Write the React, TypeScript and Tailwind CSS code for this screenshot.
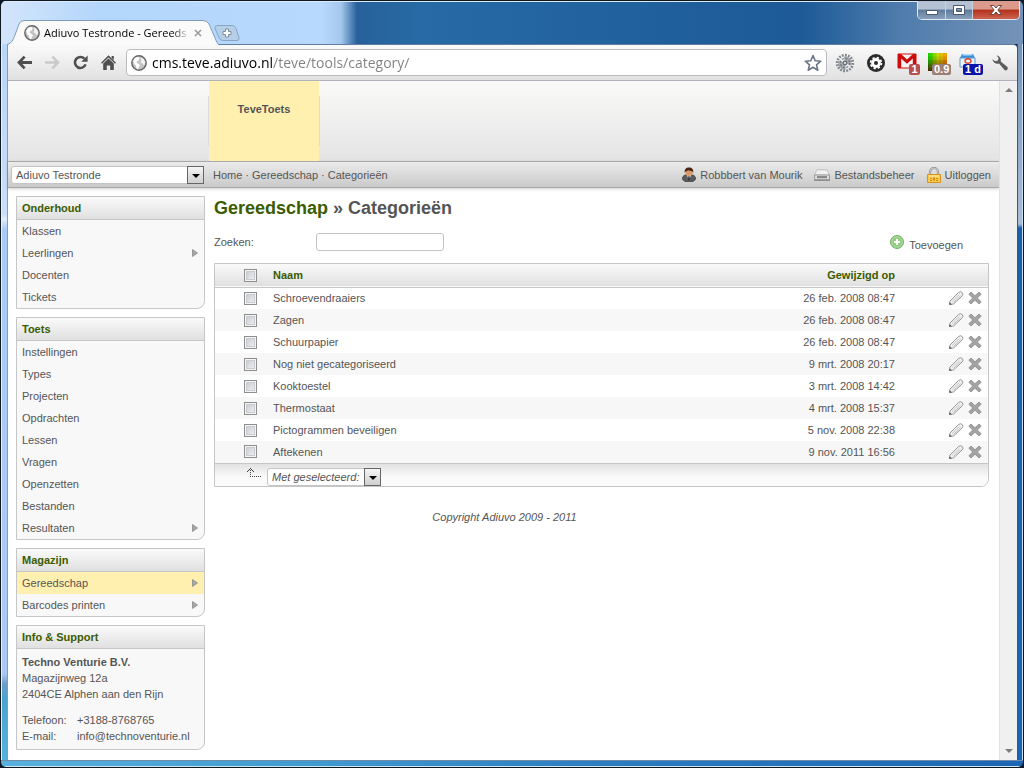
import React, { useState } from 'react';

interface MenuItem {
  label: string;
  sub?: boolean;
  active?: boolean;
}

interface Category {
  name: string;
  changed: string;
}

const menus: { title: string; items: MenuItem[] }[] = [
  {
    title: 'Onderhoud',
    items: [{ label: 'Klassen' }, { label: 'Leerlingen', sub: true }, { label: 'Docenten' }, { label: 'Tickets' }],
  },
  {
    title: 'Toets',
    items: [
      { label: 'Instellingen' },
      { label: 'Types' },
      { label: 'Projecten' },
      { label: 'Opdrachten' },
      { label: 'Lessen' },
      { label: 'Vragen' },
      { label: 'Openzetten' },
      { label: 'Bestanden' },
      { label: 'Resultaten', sub: true },
    ],
  },
  {
    title: 'Magazijn',
    items: [
      { label: 'Gereedschap', sub: true, active: true },
      { label: 'Barcodes printen', sub: true },
    ],
  },
];

const categories: Category[] = [
  { name: 'Schroevendraaiers', changed: '26 feb. 2008 08:47' },
  { name: 'Zagen', changed: '26 feb. 2008 08:47' },
  { name: 'Schuurpapier', changed: '26 feb. 2008 08:47' },
  { name: 'Nog niet gecategoriseerd', changed: '9 mrt. 2008 20:17' },
  { name: 'Kooktoestel', changed: '3 mrt. 2008 14:42' },
  { name: 'Thermostaat', changed: '4 mrt. 2008 15:37' },
  { name: 'Pictogrammen beveiligen', changed: '5 nov. 2008 22:38' },
  { name: 'Aftekenen', changed: '9 nov. 2011 16:56' },
];

/* ---------- browser icons ---------- */

const GlobeIcon = () => (
  <svg viewBox="0 0 16 16" className="w-4 h-4 shrink-0">
    <circle cx="8" cy="8" r="7.2" fill="#c4c4c4" stroke="#666" strokeWidth="1.4" />
    <path d="M2.2 5.5 4 2.8 6.8 1.8 8.6 3 8 5 6 6.2 5.6 8 7.4 8.8 9 10.4 7.6 12.4 7 14.4 5.4 13 5 10.4 3.2 9Z" fill="#fff" />
    <path d="M10 2.2 13 4.4 14.2 7.6 13 10.4 11.6 8.4 9.8 7.4 10.4 5Z" fill="#f4f4f4" />
  </svg>
);

const BackIcon = () => (
  <svg viewBox="0 0 15 15" className="w-[15px] h-[15px]" fill="none" stroke="currentColor" strokeWidth="2.8">
    <path d="M7.6 1.6 2 7.5l5.6 5.9M2.2 7.5H15" />
  </svg>
);

const ForwardIcon = () => (
  <svg viewBox="0 0 15 15" className="w-[15px] h-[15px]" fill="none" stroke="currentColor" strokeWidth="2.6">
    <path d="M7.4 1.6 13 7.5l-5.6 5.9M12.8 7.5H0" />
  </svg>
);

const ReloadIcon = () => (
  <svg viewBox="0 0 15 15" className="w-[15px] h-[15px]">
    <path d="M12.6 9.4A5.5 5.5 0 1 1 11.4 3.6" fill="none" stroke="currentColor" strokeWidth="2.6" />
    <path d="M14.6.4v6.4H8.2Z" fill="currentColor" />
  </svg>
);

const HomeIcon = () => (
  <svg viewBox="0 0 15 15" className="w-[15px] h-[15px]" fill="currentColor">
    <path d="M7.5.2 15 7.8l-1 1L7.5 2.4 1 8.8l-1-1Z" />
    <path d="M10.6 1h2.2v4l-2.2-2ZM7.5 3.6l5.3 5V15H9.2v-4.6H5.8V15H2.2V8.6Z" />
  </svg>
);

const StarIcon = () => (
  <svg viewBox="0 0 18 18" className="w-[18px] h-[18px]">
    <path d="m9 1.6 2.2 5.1 5.5.5-4.2 3.6 1.3 5.4L9 13.3l-4.8 2.9 1.3-5.4L1.3 7.2l5.5-.5Z" fill="#fff" stroke="#6b7485" strokeWidth="1.6" strokeLinejoin="round" />
  </svg>
);

const SilverGearIcon = () => (
  <svg viewBox="0 0 20 20" className="w-5 h-5">
    <circle cx="10" cy="10" r="7.7" fill="none" stroke="#83888e" strokeWidth="3" strokeDasharray="1.8 1.2" />
    <circle cx="10" cy="10" r="6.6" fill="#a3a8ae" />
    <path d="M10 10 4 7.5A6.6 6.6 0 0 1 9 3.5ZM10 10l6 2.500a6.6 6.6 0 0 1-5 4Z" fill="#e9ebee" />
    <circle cx="10" cy="10" r="4.600" fill="none" stroke="#73787f" strokeWidth="1.200" strokeDasharray="2 1.600" />
    <circle cx="10" cy="10" r="2.400" fill="#6c7178" />
    <circle cx="10" cy="10" r="1.100" fill="#f2f2f2" />
  </svg>
);

const DarkGearIcon = () => (
  <svg viewBox="0 0 20 20" className="w-5 h-5">
    <circle cx="10" cy="10" r="9" fill="#2b2b2b" />
    <circle cx="10" cy="10" r="4.9" fill="#fff" />
    <circle cx="10" cy="10" r="5.4" fill="none" stroke="#fff" strokeWidth="1.8" strokeDasharray="2.24 2" />
    <circle cx="10" cy="10" r="2" fill="#2b2b2b" />
  </svg>
);

const MailIcon = () => (
  <svg viewBox="0 0 20 16" className="w-5 h-4">
    <path d="M1 1h18v14H1Z" fill="#f4f4f4" stroke="#c11" />
    <path d="M1 15V1h3l6 5.6L16 1h3v14h-3.2V5.5L10 10.8 4.2 5.5V15Z" fill="#cf0a0a" />
  </svg>
);

const HeatIcon = () => (
  <svg viewBox="0 0 19 18" className="w-[19px] h-[18px]">
    <defs>
      <linearGradient id="heatX">
        <stop offset="0" stopColor="#00d000" />
        <stop offset=".5" stopColor="#c8e000" />
        <stop offset="1" stopColor="#ff9a00" />
      </linearGradient>
      <linearGradient id="heatY" x2="0" y2="1">
        <stop offset=".2" stopColor="#500" stopOpacity="0" />
        <stop offset="1" stopColor="#500" stopOpacity=".8" />
      </linearGradient>
    </defs>
    <path d="M0 0h19v18H0Z" fill="url(#heatX)" />
    <path d="M0 0h19v18H0Z" fill="url(#heatY)" />
    <path d="M4 0v18M8 0v18M12 0v18M16 0v18M0 4h19M0 8h19M0 12h19" stroke="#000" strokeOpacity=".1" />
  </svg>
);

const CalendarIcon = () => (
  <svg viewBox="0 0 18 16" className="w-[18px] h-4">
    <path d="M3 1h11l2 4H1Z" fill="#3f8fd4" />
    <path d="M4 1h9l.5 1.5h-10Z" fill="#b9dcf6" />
    <path d="M1 5h15v9H1Z" fill="#eaf3fb" stroke="#5a9bd6" />
    <ellipse cx="9" cy="8" rx="3" ry="2.2" fill="none" stroke="#d8462c" strokeWidth="1.4" />
  </svg>
);

const WrenchIcon = () => (
  <svg viewBox="0 0 18 18" className="w-[18px] h-[18px]" fill="#5c5c5c">
    <path d="M5.5 1.2a5 5 0 0 1 4.2 6.3l6.5 5.3a2 2 0 1 1-2.9 2.9L8 9.4a5 5 0 0 1-6.6-4.2l2.8 2 2.7-.8.7-2.500Z" />
  </svg>
);

/* ---------- page icons ---------- */

const UserIcon = () => (
  <svg viewBox="0 0 14 15" className="w-[14px] h-[15px]">
    <path d="M.6 12.500c-.4-2.500.8-4.300 2.900-4.500h7c2.100.2 3.300 2 2.900 4.500L11 14.400H3Z" fill="#5c5d60" stroke="#38383a" strokeWidth=".8" />
    <path d="M4.800 8h4.400L7 12.500Z" fill="#fff" />
    <path d="M6.500 9h1l.4 3L7 13.500 6.100 12Z" fill="#222" />
    <path d="M3.500 4h7v2q0 3-3.500 3t-3.500-3Z" fill="#d99a66" />
    <path d="M2.800 6C2.200 2.200 4 .4 7 .4s4.800 1.800 4.200 5.600L10.200 4.200 6.500 3.600 3.800 4.200Z" fill="#4a2410" />
  </svg>
);

const DriveIcon = () => (
  <svg viewBox="0 0 16 12" className="w-4 h-3">
    <path d="M3 .8h10l2.5 5.2H.5Z" fill="#f1f1f1" stroke="#b8b8b8" strokeWidth=".8" />
    <path d="M.5 6h15v4.8H.5Z" fill="#dcdcdc" stroke="#8f8f8f" strokeWidth=".8" />
    <path d="M3 7h10v2.200H3Z" fill="#8a8a8a" />
    <path d="M0 11.200h16" stroke="#777" />
  </svg>
);

const LockIcon = () => (
  <svg viewBox="0 0 14 16" className="w-[14px] h-4">
    <path d="M3 8V5a4 4 0 0 1 8 0v3" fill="none" stroke="#8c8c8c" strokeWidth="2.2" />
    <path d="M3 8V5a4 4 0 0 1 8 0v3" fill="none" stroke="#dcdcdc" strokeWidth=".8" />
    <path d="M.5 7.5h13v8H.5Z" fill="#fbc94c" stroke="#d9921a" />
    <path d="M2 8.5h10v1H2Z" fill="#fff0b5" />
    <path d="M3 11h2v1H3Zm3-.5h2v3H6Zm3 .5h2v1H9Zm-6 2h2v1H3Zm6 0h2v1H9Z" fill="#d58a1c" />
  </svg>
);

const AddIcon = () => (
  <svg viewBox="0 0 14 14" className="w-[14px] h-[14px]">
    <circle cx="7" cy="7" r="6.5" fill="#93cc83" stroke="#74b068" />
    <circle cx="7" cy="7" r="5.2" fill="none" stroke="#b5dea9" strokeWidth=".8" />
    <path d="M6 4h2v2h2v2H8v2H6V8H4V6h2Z" fill="#fff" />
  </svg>
);

const PencilIcon = () => (
  <svg viewBox="0 0 16 16" className="w-4 h-4">
    <path d="M1.500 14.500 2 11 10.500 2.500q2-1.600 3.700 0 1.600 1.600 0 3.400L5.500 14Z" fill="#f0f0f0" stroke="#999" strokeLinejoin="round" />
    <path d="m4 11.500 7.500-7.200M5.400 12.500l7.200-6.900" stroke="#bdbdbd" strokeWidth=".8" />
    <path d="m1.200 14.800.4-2.600 2.400 2.200Z" fill="#555" />
  </svg>
);

const CrossIcon = () => (
  <svg viewBox="0 0 14 14" className="w-[14px] h-[14px]">
    <path d="M3 1 7 4.800 11 1l2.200 2.200L9.300 7l3.900 3.800L11 13 7 9.200 3 13 .8 10.800 4.700 7 .8 3.200Z" fill="#a3a3a3" stroke="#8a8a8a" strokeWidth=".8" strokeLinejoin="round" />
  </svg>
);

const SubArrow = () => (
  <svg viewBox="0 0 6 8" className="w-[6px] h-2">
    <path d="M.5.5v7L5.500 4Z" fill="#a6a6a6" stroke="#8a8a8a" strokeWidth=".8" />
  </svg>
);

/* ---------- small building blocks ---------- */

const IconBadge = ({ text, className }: { text: string; className: string }) => (
  <span
    className={`absolute top-[11px] h-[11px] rounded-[2px] px-[2px] text-center font-['Liberation_Sans'] text-[11px] leading-[11px] font-bold whitespace-nowrap text-white ${className}`}
  >
    {text}
  </span>
);

interface PickerProps {
  label: string;
  option: string;
  className: string;
}

const Picker: React.FC<PickerProps> = ({ label, option, className }) => (
  <div className={`relative h-[18px] ${className}`}>
    <select
      aria-label={label}
      className="block w-full h-full appearance-none rounded-[3px] border border-[#c4c4c4] bg-white pl-1 pr-5 leading-4 text-[#555]"
    >
      <option>{option}</option>
    </select>
    <span className="pointer-events-none absolute inset-y-0 right-0 flex w-[17px] items-center justify-center border border-[#666] bg-linear-to-b from-[#f6f6f6] to-[#cfcfcf] pt-[2px]">
      <svg viewBox="0 0 8 4" className="w-2 h-1">
        <path d="M0 0h8L4 4Z" fill="#000" />
      </svg>
    </span>
  </div>
);

const CheckBox = ({ label, checked, onChange }: { label: string; checked: boolean; onChange: () => void }) => (
  <input
    type="checkbox"
    aria-label={label}
    checked={checked}
    onChange={onChange}
    className="block size-[13px] appearance-none border border-[#8e8f8f] bg-linear-to-br from-[#c3c7cf] to-[#f4f4f4] shadow-[inset_0_0_0_1px_#f4f4f4,inset_0_0_0_2px_#c8cbd0] checked:bg-[#555]"
  />
);

const PanelTitle = ({ children }: { children: React.ReactNode }) => (
  <h2 className="h-[23px] border-b border-[#c6c6c6] bg-linear-to-b from-[#fafafa] to-[#e0e0e0] px-[5px] leading-[22px] font-bold text-[#3b5c00]">
    {children}
  </h2>
);

const panelClass = 'overflow-hidden rounded-br-[8px] border border-[#c6c6c6] bg-[#f8f8f8]';

/* ---------- browser frame ---------- */

const TitleBar = () => (
  <div className="flex h-[43px] items-end bg-[linear-gradient(to_right,#d3e5fb_0,#b3d6fb_100px,#b7d9fd_320px,#a4c8ec_340px,#28619b_356px,#276aa5_420px,#1f5e9b_700px,#1d5a97_800px,#4f7cac_900px,#7593b8_100%)] pl-[6px] shadow-[inset_0_1px_0_#dcebfb]">
    <div className="relative z-10 -mb-px flex h-[25px] w-[212px] items-center pl-[17px]">
      <svg viewBox="0 0 212 25" className="absolute inset-0 h-full w-full" preserveAspectRatio="none">
        <path d="M0 25C5 23 6 20 8 15L12 4Q13.5.5 17 .5H196Q200 .5 202 4L208 18Q210 24 212 25Z" fill="#fafafa" />
        <path
          d="M0 24.5C5 23 6 20 8 15L12 4Q13.5.5 17 .5H196Q200 .5 202 4L208 18Q210 24 212 24.5"
          fill="none"
          stroke="#7f9cba"
        />
      </svg>
      <span className="relative flex items-center gap-1">
        <GlobeIcon />
        <span className="w-[146px] text-[11px] leading-4 whitespace-nowrap text-black [mask-image:linear-gradient(to_right,#000_128px,transparent_146px)]">
          Adiuvo Testronde - Gereeds
        </span>
        <button type="button" aria-label="Close tab">
          <svg viewBox="0 0 8 8" className="w-2 h-2">
            <path d="m1 1 6 6M7 1 1 7" stroke="#999" strokeWidth="1.5" />
          </svg>
        </button>
      </span>
    </div>
    <button type="button" aria-label="New tab" className="mb-[3px] -ml-[5px]">
      <svg viewBox="0 0 26 16" className="w-[26px] h-4">
        <path d="M3 .5h15q3 0 4 3l3 9q.5 3-2 3H9q-3 0-4-3l-4-9Q.5.5 3 .5Z" fill="#b6cfe8" stroke="#86a6c6" />
        <path d="M11.5 4h3v2.500H17v3h-2.500V12h-3V9.500H9v-3h2.500Z" fill="#fff" stroke="#7d8c9c" />
      </svg>
    </button>
    <div className="mr-[3px] ml-auto flex h-[19px] self-start overflow-hidden rounded-b-[5px] border border-t-0 border-[#dfe8f2]">
      <button type="button" aria-label="Minimize" className="flex w-7 items-center justify-center border-r border-[#c5d3e2] bg-[linear-gradient(#b4c2d3_45%,#5f7a9a_50%,#8aa2bd)]">
        <svg viewBox="0 0 12 10" className="w-3 h-[10px]">
          <path d="M.5 5.5h11v4H.5Z" fill="#fff" stroke="#4b5a6c" />
        </svg>
      </button>
      <button type="button" aria-label="Maximize" className="flex w-[27px] items-center justify-center border-r border-[#c5d3e2] bg-[linear-gradient(#b4c2d3_45%,#5f7a9a_50%,#8aa2bd)]">
        <svg viewBox="0 0 12 10" className="w-3 h-[10px]">
          <path d="M.5.5h11v9H.5ZM3.5 3.500v3h5v-3Z" fill="#fff" fillRule="evenodd" stroke="#4b5a6c" />
        </svg>
      </button>
      <button type="button" aria-label="Close" className="flex w-[46px] items-center justify-center bg-[linear-gradient(#dc9a8c_45%,#b4301a_50%,#cc6550)]">
        <svg viewBox="0 0 12 10" className="w-3 h-[10px]">
          <path d="M.5.5h3.300L6 3 8.200.5h3.300L7.900 5l3.600 4.500H8.200L6 7 3.800 9.500H.5L4.100 5Z" fill="#fff" stroke="#5a3a3a" strokeWidth=".9" />
        </svg>
      </button>
    </div>
  </div>
);

const Toolbar = () => (
  <div className="flex h-[37px] items-center gap-2 rounded-tr-[4px] border-t border-b border-t-[#5f7f9f] border-b-[#b0b3be] bg-linear-to-b from-[#fafafa] to-[#e1e1e2] pl-[9px] text-[#4f4f4f]">
    <div className="flex gap-[13px] pr-[2px]">
      <button type="button" aria-label="Back"><BackIcon /></button>
      <button type="button" aria-label="Forward" className="text-[#cacaca]"><ForwardIcon /></button>
      <button type="button" aria-label="Reload"><ReloadIcon /></button>
      <button type="button" aria-label="Home"><HomeIcon /></button>
    </div>
    <div className="flex h-[27px] min-w-0 flex-1 items-center gap-[5px] rounded-[4px] border border-[#bcbcc0] bg-white pr-1 pl-1">
      <GlobeIcon />
      <input
        type="text"
        aria-label="Address"
        defaultValue="cms.teve.adiuvo.nl/teve/tools/category/"
        className="h-6 min-w-0 flex-1 bg-[linear-gradient(to_right,#000_121px,#808080_121px)] bg-clip-text text-[14px] text-transparent outline-none"
      />
      <button type="button" aria-label="Bookmark"><StarIcon /></button>
    </div>
    <div className="flex items-center gap-[11px] pr-[7px]">
      <button type="button" aria-label="Settings"><SilverGearIcon /></button>
      <button type="button" aria-label="Extension"><DarkGearIcon /></button>
      <button type="button" aria-label="Mail" className="relative flex h-5 w-5">
        <MailIcon />
        <IconBadge text="1" className="left-3 w-[11px] bg-[#b8504e]" />
      </button>
      <button type="button" aria-label="PageRank" className="relative flex h-5 w-5">
        <HeatIcon />
        <IconBadge text="0.9" className="left-1 bg-[#9b7f74]" />
      </button>
      <button type="button" aria-label="Calendar" className="relative flex h-5 w-5">
        <CalendarIcon />
        <IconBadge text="1 d" className="left-1 bg-[#0a14a8]" />
      </button>
      <button type="button" aria-label="Menu" className="flex w-5 justify-center"><WrenchIcon /></button>
    </div>
  </div>
);

const Scrollbar = () => (
  <div className="flex w-[18px] flex-col items-center justify-between border-l border-[#e2e2e2] bg-[#f0f0f0] py-[7px]">
    <svg viewBox="0 0 8 4" className="w-2 h-1">
      <path d="M0 4h8L4 0Z" fill="#7c7c7c" />
    </svg>
    <svg viewBox="0 0 8 4" className="w-2 h-1">
      <path d="M0 0h8L4 4Z" fill="#7c7c7c" />
    </svg>
  </div>
);

/* ---------- CMS page ---------- */

const NavBar = () => (
  <nav className="flex h-[27px] items-center border-t border-b border-[#a9a9a9] bg-linear-to-b from-[#ebebeb] to-[#cacaca] pr-2 pl-[3px] shadow-[0_1px_3px_rgba(0,0,0,0.2)]">
    <Picker label="Project" option="Adiuvo Testronde" className="w-[193px]" />
    <div className="flex gap-[3px] pl-[9px]">
      <a href="#home">Home</a>
      <span>·</span>
      <a href="#gereedschap">Gereedschap</a>
      <span>·</span>
      <a href="#categorieen">Categorieën</a>
    </div>
    <div className="ml-auto flex gap-3">
      <a href="#profiel" className="flex items-center gap-1"><UserIcon />Robbbert van Mourik</a>
      <a href="#bestanden" className="flex items-center gap-1"><DriveIcon />Bestandsbeheer</a>
      <a href="#uitloggen" className="flex items-center gap-1"><LockIcon />Uitloggen</a>
    </div>
  </nav>
);

const Sidebar = () => (
  <aside className="flex w-[189px] shrink-0 flex-col gap-2">
    {menus.map((menu) => (
      <section key={menu.title} className={panelClass}>
        <PanelTitle>{menu.title}</PanelTitle>
        <ul>
          {menu.items.map((item) => (
            <li key={item.label}>
              <a
                href="#menu"
                className={`flex h-[22px] items-center justify-between pr-[6px] pl-[5px] ${item.active ? 'bg-[#fff0b0]' : ''}`}
              >
                {item.label}
                {item.sub && <SubArrow />}
              </a>
            </li>
          ))}
        </ul>
      </section>
    ))}
    <section className={panelClass}>
      <PanelTitle>Info &amp; Support</PanelTitle>
      <div className="p-[5px] leading-4">
        <p className="font-bold">Techno Venturie B.V.</p>
        <p>Magazijnweg 12a</p>
        <p>2404CE Alphen aan den Rijn</p>
        <dl className="mt-[10px] grid grid-cols-[55px_1fr]">
          <dt>Telefoon:</dt>
          <dd>+3188-8768765</dd>
          <dt>E-mail:</dt>
          <dd><a href="mailto:info@technoventurie.nl">info@technoventurie.nl</a></dd>
        </dl>
      </div>
    </section>
  </aside>
);

const CategoryTable = () => {
  const [selected, setSelected] = useState<string[]>([]);
  const allSelected = selected.length === categories.length;

  const toggle = (name: string) =>
    setSelected((prev) => (prev.includes(name) ? prev.filter((n) => n !== name) : [...prev, name]));

  return (
    <div className="overflow-hidden rounded-br-[8px] border border-[#c6c6c6]">
      <table className="w-full table-fixed border-collapse">
        <thead>
          <tr className="h-[23px] border-b border-[#c6c6c6] bg-linear-to-b from-[#fafafa] to-[#e0e0e0] text-[#3b5c00]">
            <th className="w-[58px] pl-[29px]">
              <CheckBox
                label="Alles selecteren"
                checked={allSelected}
                onChange={() => setSelected(allSelected ? [] : categories.map((c) => c.name))}
              />
            </th>
            <th className="text-left">Naam</th>
            <th className="w-[160px] text-right">Gewijzigd op</th>
            <th className="w-[93px]"></th>
          </tr>
        </thead>
        <tbody>
          {categories.map((c) => (
            <tr key={c.name} className="h-[22px] bg-white even:bg-[#f7f7f7]">
              <td className="pl-[29px]">
                <CheckBox label={c.name} checked={selected.includes(c.name)} onChange={() => toggle(c.name)} />
              </td>
              <td>{c.name}</td>
              <td className="text-right">{c.changed}</td>
              <td>
                <div className="flex items-center justify-end gap-1 pr-[6px]">
                  <button type="button" aria-label="Bewerken"><PencilIcon /></button>
                  <button type="button" aria-label="Verwijderen"><CrossIcon /></button>
                </div>
              </td>
            </tr>
          ))}
        </tbody>
        <tfoot>
          <tr className="h-[23px] border-t border-[#c6c6c6] bg-linear-to-b from-[#e2e2e2] to-[#fafafa] to-60%">
            <td colSpan={4}>
              <div className="flex items-center gap-[6px] pt-1 pl-8">
                <svg viewBox="0 0 14 10" className="mb-2 w-[14px] h-[10px]" fill="#444">
                  <path d="M3 0h1v1H3ZM2 1h1v1H2Zm2 0h1v1H4ZM1 2h1v1H1Zm4 0h1v1H5ZM0 3h1v1H0Zm6 0h1v1H6ZM3 2h1v1H3Zm0 2h1v1H3Zm0 2h1v1H3Zm0 2h1v1H3Zm2 0h1v1H5Zm2 0h1v1H7Zm2 0h1v1H9Zm2 0h1v1h-1Zm2 0h1v1h-1Z" />
                </svg>
                <Picker label="Actie" option="Met geselecteerd:" className="w-[114px] italic" />
              </div>
            </td>
          </tr>
        </tfoot>
      </table>
    </div>
  );
};

const App = () => {
  return (
    <div className="bg-[#0b1a2c] font-['Open_Sans','Noto_Sans',sans-serif]">
      <div className="flex min-h-screen flex-col overflow-hidden rounded-[6px] border border-[#101820]">
        <TitleBar />
        <div className="flex flex-1">
          <div className="w-[7px] border-r border-l border-r-[#7f9cba] border-l-[#e6f1fc] bg-[linear-gradient(#b9d5f8_0,#c9def8_170px,#e2edfa_175px,#a8ccf4_185px,#a9c9f3_630px,#6e9cc9_640px,#4aa3d0_655px,#58b2de_100%)]"></div>
          <div className="flex min-w-0 flex-1 flex-col">
            <Toolbar />
            <div className="flex flex-1 bg-white">
              <div className="flex-1 font-['Liberation_Sans',Arial,sans-serif] text-[11px] leading-[14px] text-[#555]">
                <header className="flex h-20 items-start bg-linear-to-b from-[#fafaf9] to-[#e4e4e4] pl-[200px]">
                  <div className="flex h-full items-center">
                    <span className="h-[50px] w-px bg-[#dcdcdc]"></span>
                    <a href="#tevetoets" className="h-full w-[110px] bg-[#fff0b0] pt-[21px] text-center font-bold">
                      TeveToets
                    </a>
                    <span className="h-[50px] w-px bg-[#dcdcdc]"></span>
                  </div>
                </header>
                <NavBar />
                <div className="flex gap-[9px] pt-2 pr-[10px] pb-[10px] pl-2">
                  <Sidebar />
                  <main className="min-w-0 flex-1">
                    <h1 className="text-[18px] leading-6 font-bold">
                      <a href="#gereedschap" className="text-[#3b5c00]">Gereedschap</a> » Categorieën
                    </h1>
                    <div className="mt-3 mb-3 flex h-[19px] items-center">
                      <label htmlFor="zoeken" className="w-[102px]">Zoeken:</label>
                      <input id="zoeken" type="text" className="h-[18px] w-32 rounded-[3px] border border-[#c4c4c4] bg-white px-1" />
                      <a href="#toevoegen" className="mr-[26px] ml-auto flex items-center gap-[5px]">
                        <AddIcon />
                        <span className="pt-[7px]">Toevoegen</span>
                      </a>
                    </div>
                    <CategoryTable />
                    <footer className="mt-[23px] pr-[194px] text-center italic">Copyright Adiuvo 2009 - 2011</footer>
                  </main>
                </div>
              </div>
              <Scrollbar />
            </div>
          </div>
          <div className="w-[6px] border-r border-l border-r-[#cfe0f2] border-l-[#345a80] bg-[linear-gradient(#7593b8_0,#a9bdd6_180px,#1c5fa8_184px,#1b66b4_100%)]"></div>
        </div>
        <div className="h-[7px] border-t border-b border-t-[#6f8ba8] border-b-[#cfe6f6] bg-[linear-gradient(to_right,#58b2de,#3f9bd0_30%,#2a7cc0_60%,#1b66b4)]"></div>
      </div>
    </div>
  );
};

export default App;
